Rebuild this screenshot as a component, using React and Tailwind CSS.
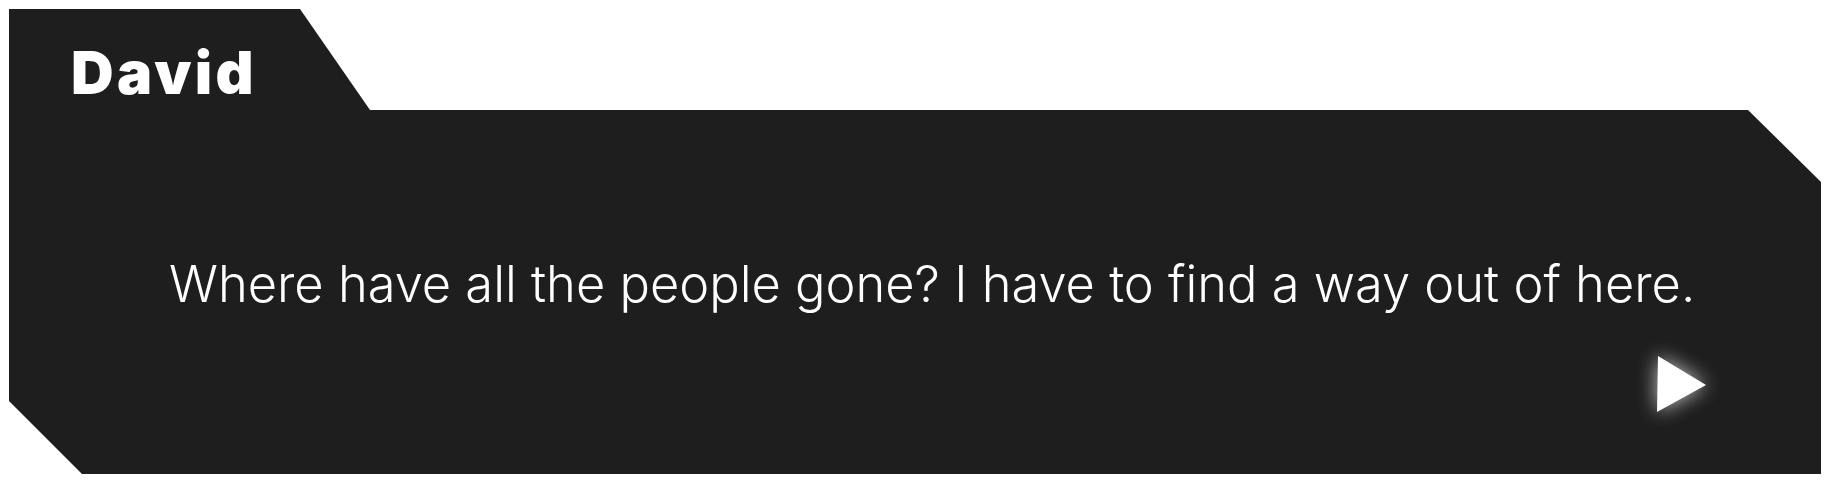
import React from "react";

const DialogueBox = ({ speaker, line }) => {
  return (
    <div className="pt-[9px] pl-[9px] bg-white">
      {/* name tab */}
      <div
        className="w-[361px] h-[101px] bg-[#1e1e1e] pl-[62px] pt-[34px]"
        style={{ clipPath: "polygon(0 0, 291px 0, 361px 101px, 0 101px)" }}
      >
        <div className="text-white text-[59px] leading-none font-black tracking-[0.055em] font-['Inter',sans-serif]">
          {speaker}
        </div>
      </div>

      {/* dialogue body */}
      <div
        className="w-[1812px] h-[364px] bg-[#1e1e1e] flex flex-col"
        style={{
          clipPath:
            "polygon(0 0, 1739px 0, 1812px 72px, 1812px 364px, 73px 364px, 0 291px)",
        }}
      >
        <p className="pt-[149px] pl-[160px] text-white text-[50.6px] leading-none font-light font-['Inter',sans-serif]">
          {line}
        </p>
        <div className="flex justify-end pr-[114px] pt-[46px]">
          <svg
            width="50"
            height="56"
            viewBox="0 0 50 56"
            className="drop-shadow-[0_0_10px_rgba(255,255,255,0.75)]"
          >
            <polygon points="1,0 49,29 0,56" fill="#ffffff" />
          </svg>
        </div>
      </div>
    </div>
  );
};

export default function App() {
  return (
    <div className="w-[1831px] h-[482px] bg-white">
      <DialogueBox
        speaker="David"
        line="Where have all the people gone? I have to find a way out of here."
      />
    </div>
  );
}
